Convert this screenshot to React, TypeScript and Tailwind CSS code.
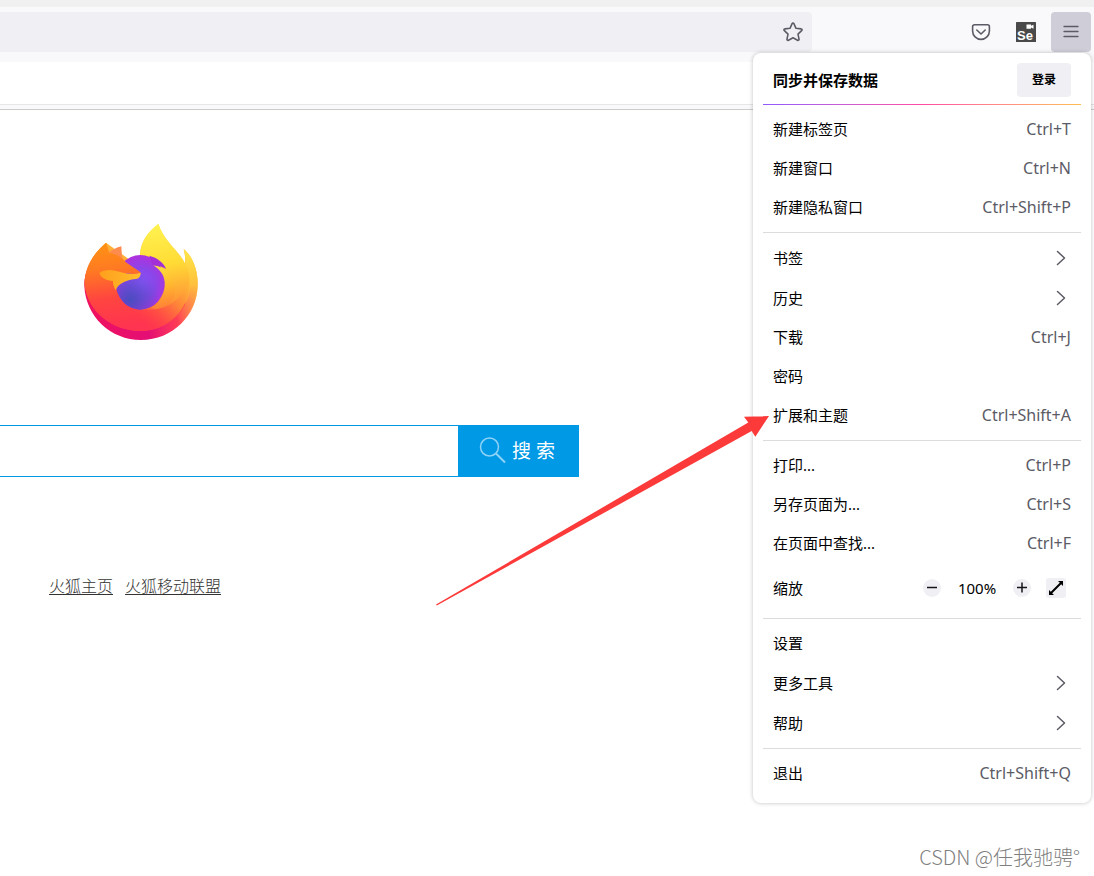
import { Fragment } from 'react'
import { clsx } from 'clsx'

interface MenuEntry {
  label: string
  shortcut?: string
  submenu?: boolean
  zoom?: boolean
}

const groups: MenuEntry[][] = [
  [
    { label: '新建标签页', shortcut: 'Ctrl+T' },
    { label: '新建窗口', shortcut: 'Ctrl+N' },
    { label: '新建隐私窗口', shortcut: 'Ctrl+Shift+P' },
  ],
  [
    { label: '书签', submenu: true },
    { label: '历史', submenu: true },
    { label: '下载', shortcut: 'Ctrl+J' },
    { label: '密码' },
    { label: '扩展和主题', shortcut: 'Ctrl+Shift+A' },
  ],
  [
    { label: '打印...', shortcut: 'Ctrl+P' },
    { label: '另存页面为...', shortcut: 'Ctrl+S' },
    { label: '在页面中查找...', shortcut: 'Ctrl+F' },
    { label: '缩放', zoom: true },
  ],
  [
    { label: '设置' },
    { label: '更多工具', submenu: true },
    { label: '帮助', submenu: true },
  ],
  [{ label: '退出', shortcut: 'Ctrl+Shift+Q' }],
]

function FirefoxLogo() {
  return (
    <svg viewBox="42 42 342 348" className="h-[116px] w-[114px]" role="img" aria-label="Firefox">
      <defs>
        <linearGradient id="body" gradientUnits="userSpaceOnUse" x1="320" y1="90" x2="130" y2="380">
          <stop offset="0" stopColor="#ffe847" />
          <stop offset="0.3" stopColor="#ffc13a" />
          <stop offset="0.52" stopColor="#ff8a34" />
          <stop offset="0.74" stopColor="#ff4a3e" />
          <stop offset="1" stopColor="#ff3050" />
        </linearGradient>
        <linearGradient id="left" gradientUnits="userSpaceOnUse" x1="120" y1="100" x2="150" y2="350">
          <stop offset="0" stopColor="#ff9214" />
          <stop offset="0.3" stopColor="#ff7a22" />
          <stop offset="0.65" stopColor="#ff4540" />
          <stop offset="1" stopColor="#ff3450" />
        </linearGradient>
        <linearGradient id="sweep" gradientUnits="userSpaceOnUse" x1="362" y1="200" x2="220" y2="340">
          <stop offset="0" stopColor="#ffc637" />
          <stop offset="0.45" stopColor="#ff8239" />
          <stop offset="1" stopColor="#ff4a40" stopOpacity="0" />
        </linearGradient>
        <linearGradient id="base" gradientUnits="userSpaceOnUse" x1="50" y1="300" x2="380" y2="240">
          <stop offset="0" stopColor="#f0125e" />
          <stop offset="0.5" stopColor="#e40e75" />
          <stop offset="0.78" stopColor="#ff3d55" />
          <stop offset="1" stopColor="#ffbf42" />
        </linearGradient>
        <linearGradient id="rightEdge" gradientUnits="userSpaceOnUse" x1="0" y1="120" x2="0" y2="330">
          <stop offset="0" stopColor="#ffe747" />
          <stop offset="0.5" stopColor="#ffc03c" />
          <stop offset="1" stopColor="#ff5050" stopOpacity="0" />
        </linearGradient>
        <linearGradient id="flame" gradientUnits="userSpaceOnUse" x1="260" y1="50" x2="300" y2="300">
          <stop offset="0" stopColor="#fff14f" />
          <stop offset="0.45" stopColor="#ffdc35" />
          <stop offset="1" stopColor="#ff8836" />
        </linearGradient>
        <linearGradient id="tongue" gradientUnits="userSpaceOnUse" x1="260" y1="165" x2="290" y2="300">
          <stop offset="0" stopColor="#ffe33c" />
          <stop offset="0.5" stopColor="#ffb52f" />
          <stop offset="1" stopColor="#ff7a38" />
        </linearGradient>
        <radialGradient id="globe" gradientUnits="userSpaceOnUse" cx="212" cy="220" r="88">
          <stop offset="0" stopColor="#8c53fb" />
          <stop offset="0.5" stopColor="#8a46e8" />
          <stop offset="1" stopColor="#b32fdc" />
        </radialGradient>
        <radialGradient id="globeLow" gradientUnits="userSpaceOnUse" cx="180" cy="270" r="90">
          <stop offset="0" stopColor="#4a4cc0" />
          <stop offset="1" stopColor="#4a4cc0" stopOpacity="0" />
        </radialGradient>
        <linearGradient id="muzzle" gradientUnits="userSpaceOnUse" x1="90" y1="185" x2="210" y2="200">
          <stop offset="0" stopColor="#ff9f1c" />
          <stop offset="1" stopColor="#ffbd2c" />
        </linearGradient>
      </defs>
      <path
        fill="url(#base)"
        d="M60 165C45 190 43 210 43 228C47 320 122 390 213 390C308 390 382 315 383 225C384 178 366 137 341 117C346 136 347 150 344 170Z"
      />
      <path fill="url(#rightEdge)" d="M341 117C366 137 384 178 383 225C382 280 355 330 320 358L340 240L344 170C347 150 346 136 341 117Z" />
      <path
        fill="url(#body)"
        d="M108 98C64 135 42 182 44 226C55 310 132 364 213 363C292 361 356 304 361 226C364 200 357 179 345 160C327 120 286 100 265 42C235 64 211 94 210 136L180 150Z"
      />
      <path fill="url(#flame)" d="M265 42C236 64 211 94 210 140L270 170L305 290C340 265 361 230 358 196C350 143 290 114 265 42Z" />
      {/* Lower ring, then the lighter sweep fading into it from the right */}
      <path
        fill="url(#left)"
        d="M108 98C64 135 42 182 44 226C55 310 132 364 213 363C270 362 320 332 345 284C350 270 335 265 320 272C290 294 255 302 213 299L165 280L180 160L157 150L117 128Z"
      />
      <path
        fill="url(#sweep)"
        d="M361 198C350 255 300 305 213 299L190 300L190 362C198 363 205 363 213 363C292 361 364 304 361 198Z"
      />
      <path fill="#ff8b4e" d="M117 129C127 119 140 112 154 109C155 125 155 139 159 152Z" />
      <ellipse cx="211" cy="217" rx="74" ry="82" fill="url(#globe)" />
      <ellipse cx="211" cy="217" rx="74" ry="82" fill="url(#globeLow)" />
      <path
        fill="url(#tongue)"
        d="M249 166C270 165 315 192 315 244C314 269 300 284 280 291C268 296 256 298 245 293C275 277 288 248 284 215C282 195 270 178 249 166Z"
      />
      <path fill="#a32fd6" d="M238 137C262 143 282 159 288 177C275 169 262 166 249 167Z" />
      <path
        fill="url(#left)"
        d="M108 98L117 129C140 130 153 142 166 155C184 169 204 179 213 189C202 193 184 193 170 190L137 225C130 255 148 289 190 299L130 300L70 230L75 160Z"
      />
      <path
        fill="url(#muzzle)"
        d="M88 189C106 175 132 180 154 187C176 194 194 193 212 188C212 199 207 207 195 207C170 210 144 220 137 241C131 230 128 221 129 213C110 212 93 205 88 189Z"
      />
    </svg>
  )
}

function AddressBar() {
  return (
    <header className="border-t-[7px] border-[#f0f0f0] bg-[#f9f9fb]">
      <div className="flex items-center gap-[5px] pt-[5px] pr-[3px] pb-[10px]">
        <div className="mr-36 flex h-10 flex-1 rounded-r-[4px] bg-[#f0f0f4]">
          <input type="text" aria-label="地址栏" className="min-w-0 flex-1 bg-transparent px-3 outline-none" />
          <button type="button" aria-label="为此页添加书签" className="flex w-[38px] items-center justify-center">
            <svg viewBox="0 0 20 20" className="size-5" fill="none" stroke="#5b5b66" strokeWidth="1.6" strokeLinejoin="round">
              <path d="M9.1 1.7a1 1 0 0 1 1.8 0l2.1 4.6 5 .6a1 1 0 0 1 .6 1.8l-3.6 3.4 1 5a1 1 0 0 1-1.5 1.1L10 15.8l-4.5 2.4A1 1 0 0 1 4 17.1l1-5L1.4 8.7a1 1 0 0 1 .6-1.8l5-.6z" />
            </svg>
          </button>
        </div>
        <button type="button" aria-label="保存到 Pocket" className="flex size-10 items-center justify-center">
          <svg viewBox="0 0 20 20" className="size-5" fill="none" stroke="#5b5b66" strokeWidth="1.6" strokeLinecap="round" strokeLinejoin="round">
            <path d="M3.5 2.8h13a1.9 1.9 0 0 1 1.9 1.900v4.300a8.400 8.400 0 0 1-16.800 0V4.700a1.900 1.900 0 0 1 1.900-1.900z" />
            <path d="M5.800 8l4.200 4 4.200-4" />
          </svg>
        </button>
        <button type="button" aria-label="Selenium IDE" className="flex size-10 items-center justify-center">
          <svg viewBox="0 0 20 20" className="size-5">
            <rect width="20" height="20" rx="0.5" fill="#4a4a4a" />
            <path fill="#fff" d="M10.5 2.500h4.500v1.300l2.500-1.100v4l-2.500-1.100v1.200h-4.500z" />
            <text x="1" y="18" fill="#fff" fontSize="13" fontWeight="700" fontFamily="Liberation Sans, sans-serif">Se</text>
          </svg>
        </button>
        <button type="button" aria-label="打开应用程序菜单" className="flex size-10 items-center justify-center rounded-[4px] bg-[#cfced8]">
          <svg viewBox="0 0 20 20" className="size-5" stroke="#5b5b66" strokeWidth="1.3" strokeLinecap="round">
            <path d="M3 4.500h14M3 9.500h14M3 14.500h14" />
          </svg>
        </button>
      </div>
    </header>
  )
}

function ZoomControls() {
  return (
    <div className="flex items-center pr-[5px]">
      <button type="button" aria-label="缩小" className="flex size-[18px] items-center justify-center rounded-full bg-[#f0f0f4]">
        <svg viewBox="0 0 12 12" className="size-3" stroke="#15141a" strokeWidth="1.5">
          <path d="M1 5.500h10" />
        </svg>
      </button>
      <span className="w-[72px] text-center">100%</span>
      <button type="button" aria-label="放大" className="flex size-[18px] items-center justify-center rounded-full bg-[#f0f0f4]">
        <svg viewBox="0 0 12 12" className="size-3" stroke="#15141a" strokeWidth="1.5">
          <path d="M1 5.500h10M6 .5v10" />
        </svg>
      </button>
      <button type="button" aria-label="全屏" className="ml-[15px] flex size-5 items-center justify-center rounded-[3px] bg-[#f0f0f4]">
        <svg viewBox="0 0 16 16" className="size-4" fill="#000">
          <path d="M10 1h5v5l-1.800-1.800-9 9L6 15H1v-5l1.800 1.800 9-9z" />
        </svg>
      </button>
    </div>
  )
}

function MenuRow({ label, shortcut, submenu, zoom }: MenuEntry) {
  if (zoom) {
    return (
      <div className="flex h-[50px] items-center justify-between px-[10px]">
        <span>{label}</span>
        <ZoomControls />
      </div>
    )
  }

  return (
    <button
      type="button"
      className={clsx('flex w-full items-center justify-between px-[10px] text-left', submenu ? 'h-10' : 'h-[39px]')}
    >
      <span>{label}</span>
      {shortcut && <span className="text-base leading-[19px] text-[#5b5b66]">{shortcut}</span>}
      {submenu && (
        <svg viewBox="0 0 20 20" className="size-5" fill="none" stroke="#5b5b66" strokeWidth="1.5" strokeLinecap="round" strokeLinejoin="round">
          <path d="M6.500 3.500l7 6.500-7 6.500" />
        </svg>
      )}
    </button>
  )
}

function AppMenu() {
  return (
    <nav className="absolute top-[53px] right-[3px] w-[338px] rounded-lg bg-white p-[10px] text-[15px] leading-[19px] text-black shadow-[0_0_4px_rgba(0,0,0,0.25)]">
      <div className="mb-[7px] flex h-[34px] items-center justify-between px-[10px] font-bold">
        <span>同步并保存数据</span>
        <button type="button" className="h-[34px] w-[54px] rounded-[4px] bg-[#f0f0f4] text-xs">
          登录
        </button>
      </div>
      <div className="h-px bg-linear-to-r from-[#9059ff] via-[#ff4aa2] to-[#ffbd4f]" />
      {groups.map((group, idx) => (
        <Fragment key={group[0].label}>
          {idx > 0 && <hr className="border-[#dcdcde]" />}
          <div className={clsx('pt-[5px]', idx < groups.length - 1 && 'pb-[5px]')}>
            {group.map((entry) => (
              <MenuRow key={entry.label} {...entry} />
            ))}
          </div>
        </Fragment>
      ))}
    </nav>
  )
}

function StartPage() {
  return (
    <main className="flex-1 pt-[114px]">
      <div className="pl-[84px]">
        <FirefoxLogo />
      </div>
      <form className="mt-[85px] flex h-[52px] w-full max-w-[579px]">
        <input
          type="text"
          aria-label="搜索内容"
          className="min-w-0 flex-1 border-y border-[#0099e5] bg-white px-3 outline-none"
        />
        <button type="button" className="flex w-[121px] items-center bg-[#0099e5] pl-[21px] text-[19px] leading-6 text-white">
          <svg viewBox="0 0 28 28" className="mr-[5px] size-7" fill="none" stroke="#8fd3f7" strokeWidth="1.5">
            <circle cx="10.5" cy="10" r="9" />
            <path d="M17 16.500l9 9" strokeWidth="2" />
          </svg>
          搜 索
        </button>
      </form>
      <div className="mt-[97px] flex gap-3 pl-[49px] text-base leading-6 font-light text-[#333]">
        <a href="#home" className="underline underline-offset-2">火狐主页</a>
        <a href="#mobile" className="underline underline-offset-2">火狐移动联盟</a>
      </div>
    </main>
  )
}

export default function App() {
  return (
    <div className="relative flex min-h-screen flex-col bg-white font-['Noto_Sans','Noto_Sans_CJK_SC',sans-serif]">
      <AddressBar />
      <div className="h-[42px] bg-white" />
      <div className="h-[6px] border-t border-b border-t-[#e6e6e6] border-b-[#cccccc] bg-[#f9f9fb]" />
      <StartPage />
      <footer className="pr-[14px] pb-[5px] text-right font-['Noto_Sans_CJK_SC',sans-serif] text-xl leading-7 font-light text-[#7f7f7f]">
        CSDN @任我驰骋°
      </footer>
      <AppMenu />
      {/* Arrow pointing at the add-ons entry */}
      <svg viewBox="0 0 334 190" className="pointer-events-none absolute top-[416px] right-[324px] h-[190px] w-[334px]" fill="#fc3a3a">
        <path d="M333 0L308 .7l4.300 5.900L0 188.500l.8 1L315.700 15l3.600 5.700z" />
      </svg>
    </div>
  )
}
